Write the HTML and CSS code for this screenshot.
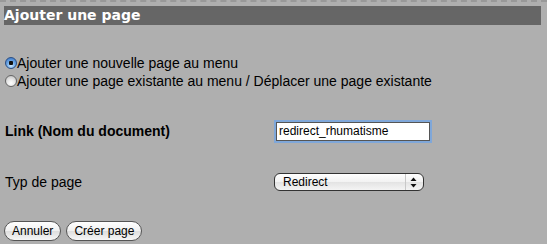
FILE: index.html
```html
<!DOCTYPE html>
<html lang="fr">
<head>
    <meta charset="UTF-8">
    <title>Ajouter une page</title>
    <link rel="stylesheet" href="styles.css">
</head>
<body>
<div class="page">
    <h2 class="title">Ajouter une page</h2>
    <form class="add-form">
        <div class="choices">
            <label class="choice"><input type="radio" name="mode" checked>Ajouter une nouvelle page au menu</label>
            <label class="choice"><input type="radio" name="mode">Ajouter une page existante au menu / Déplacer une page existante</label>
        </div>
        <div class="row row-link">
            <label class="row-label strong" for="link">Link (Nom du document)</label>
            <input class="text-input" id="link" type="text" value="redirect_rhumatisme">
        </div>
        <div class="row row-type">
            <label class="row-label" for="type">Typ de page</label>
            <span class="select-wrap">
                <select class="select" id="type">
                    <option>Redirect</option>
                </select>
                <svg class="select-arrows" width="7" height="11" viewBox="0 0 7 11">
                    <path d="M3.5 0.5 L6.5 4 L0.5 4 Z" fill="#111"/>
                    <path d="M3.5 10.5 L6.5 7 L0.5 7 Z" fill="#111"/>
                </svg>
            </span>
        </div>
        <div class="actions">
            <button type="button" class="btn">Annuler</button>
            <button type="button" class="btn">Créer page</button>
        </div>
    </form>
</div>
</body>
</html>
```

FILE: styles.css
```css
body, div, h2, form, label, input, select, button {
    margin: 0;
    padding: 0;
}

html, body {
    background: #afafaf;
}

body {
    font-family: "Liberation Sans", Arial, sans-serif;
    font-size: 14px;
    color: #000;
}

.page {
    border-top: 2px dashed #999;
    padding: 4px 6px 0 4px;
    height: 238px;
}

.title {
    background: #666;
    color: #fff;
    font-family: "DejaVu Sans", Verdana, sans-serif;
    font-weight: bold;
    font-size: 14px;
    height: 19px;
    line-height: 19px;
}

.choices {
    margin-top: 29px;
    display: flex;
    flex-direction: column;
}

.choice {
    display: flex;
    align-items: center;
    height: 18px;
    line-height: 18px;
}

.choice input {
    -webkit-appearance: none;
    appearance: none;
    width: 12px;
    height: 12px;
    margin: 0 0 0 1px;
    border: 1px solid #666;
    border-radius: 50%;
    background: radial-gradient(circle at 50% 70%, #fff 0%, #e6e6e6 45%, #b9b9b9 100%);
    box-sizing: border-box;
}

.choice input:checked {
    border-color: #2b4f85;
    background: radial-gradient(circle, #111 0, #111 2px, transparent 2.5px),
                radial-gradient(circle at 50% 75%, #cfeaff 0%, #6fa9e6 45%, #2f6cc0 100%);
}

.row {
    display: flex;
    align-items: center;
    height: 22px;
}

.row-link {
    margin-top: 30px;
}

.row-type {
    margin-top: 29px;
}

.row-label {
    width: 269px;
    padding-left: 1px;
}

.strong {
    font-weight: bold;
}

.text-input {
    width: 154px;
    height: 19px;
    box-sizing: border-box;
    border: 1px solid #555;
    background: #fff;
    box-shadow: 0 0 0 2px #7fa7d9;
    font-family: "Liberation Sans", Arial, sans-serif;
    font-size: 12px;
    padding: 0 0 0 2px;
    margin-left: 2px;
    color: #000;
    outline: none;
}

.select-wrap {
    position: relative;
    display: inline-block;
    height: 18px;
}

.select {
    -webkit-appearance: none;
    appearance: none;
    width: 150px;
    height: 18px;
    box-sizing: border-box;
    border: 1px solid #333;
    border-radius: 6px;
    background: linear-gradient(#ffffff, #f2f2f2 50%, #e3e3e3 51%, #f4f4f4);
    font-family: "Liberation Sans", Arial, sans-serif;
    font-size: 12px;
    padding: 0 0 0 8px;
    color: #000;
}

.select-wrap::after {
    content: "";
    position: absolute;
    top: 1px;
    bottom: 1px;
    right: 18px;
    width: 1px;
    background: #c8c8c8;
}

.select-arrows {
    position: absolute;
    right: 7px;
    top: 4px;
}

.actions {
    margin-top: 28px;
    display: flex;
    gap: 5px;
}

.btn {
    height: 20px;
    padding: 0 7px;
    border: 1px solid #555;
    border-radius: 10px;
    background: linear-gradient(#ffffff, #f0f0f0 50%, #dedede 52%, #f6f6f6);
    font-family: "Liberation Sans", Arial, sans-serif;
    font-size: 12px;
    color: #000;
}
```
